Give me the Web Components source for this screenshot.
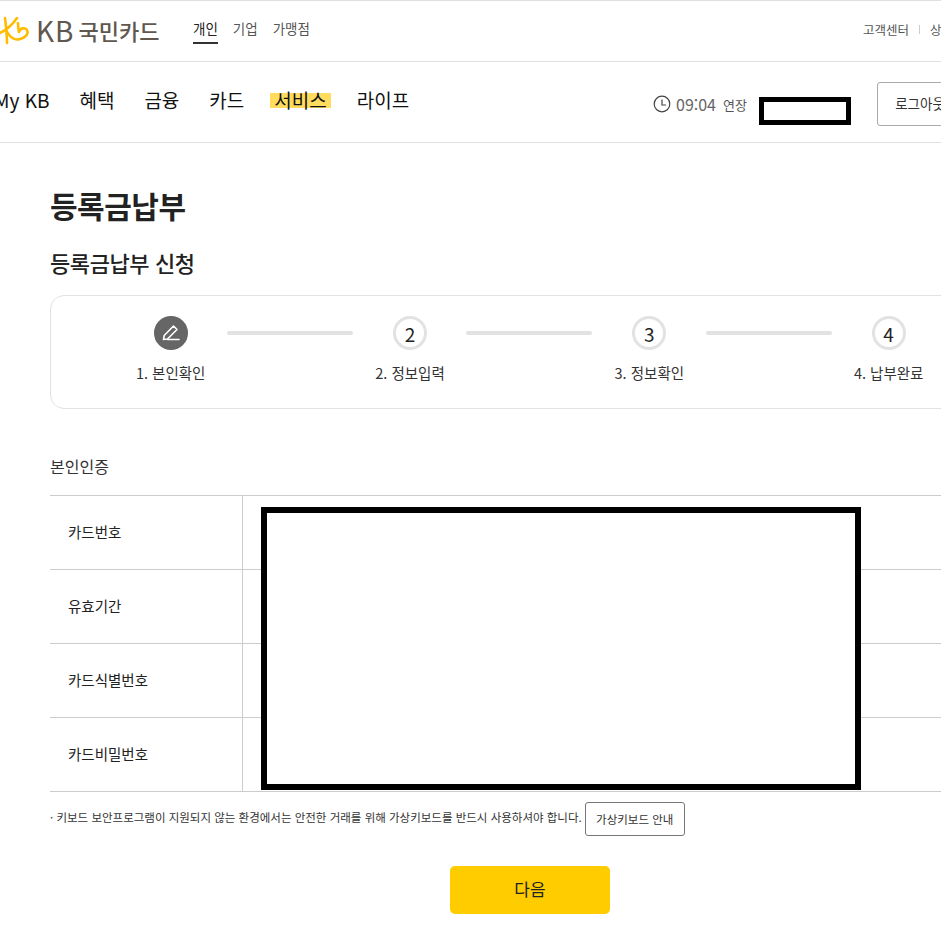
<!DOCTYPE html>
<html lang="ko">
<head>
<meta charset="utf-8">
<title>등록금납부</title>
<style>
html, body { margin: 0; padding: 0; height: 931px; overflow: hidden; background: #fff; }
body { font-family: "Noto Sans CJK KR", "Noto Sans", sans-serif; color: #222; width: 941px; }
</style>
</head>
<body>
<kb-top-bar>
  <kb-tab active>개인</kb-tab>
  <kb-tab>기업</kb-tab>
  <kb-tab>가맹점</kb-tab>
</kb-top-bar>
<kb-main-nav>
  <kb-nav-item>My KB</kb-nav-item>
  <kb-nav-item>혜택</kb-nav-item>
  <kb-nav-item>금융</kb-nav-item>
  <kb-nav-item>카드</kb-nav-item>
  <kb-nav-item mark>서비스</kb-nav-item>
  <kb-nav-item>라이프</kb-nav-item>
</kb-main-nav>
<kb-page>
  <kb-steps>
    <kb-step label="1. 본인확인" active></kb-step>
    <kb-step label="2. 정보입력">2</kb-step>
    <kb-step label="3. 정보확인">3</kb-step>
    <kb-step label="4. 납부완료" last>4</kb-step>
  </kb-steps>
  <kb-form>
    <kb-row label="카드번호"></kb-row>
    <kb-row label="유효기간"></kb-row>
    <kb-row label="카드식별번호"></kb-row>
    <kb-row label="카드비밀번호"></kb-row>
  </kb-form>
  <kb-note></kb-note>
  <kb-next>다음</kb-next>
</kb-page>

<script>
const topBarTmp = document.createElement('template');
topBarTmp.innerHTML = `
<style>
:host { display: flex; height: 60px; border-top: 1px solid #e0e0e0; border-bottom: 1px solid #e0e0e0; align-items: flex-start; white-space: nowrap; width: 941px; overflow: hidden; }
.logo { display: flex; align-items: center; width: 193px; height: 58px; flex: none; }
.logo svg { flex: none; margin-right: 6px; }
.logo span { color: #60584f; line-height: 58px; }
.logo .kb { font-size: 28px; letter-spacing: 1px; margin-right: 4px; }
.logo .name { font-size: 22px; font-weight: 500; }
.tabs { display: flex; gap: 15px; flex: none; }
.links { margin-left: auto; display: flex; align-items: center; height: 57px; font-size: 12.5px; color: #555; margin-right: -12px; flex: none; }
.links i { width: 1px; height: 9px; background: #ccc; margin: 0 10px; }
</style>
<div class="logo">
  <svg width="30" height="32" viewBox="0 0 30 32" fill="none" stroke="#ffbc00" stroke-width="2.6" stroke-linecap="round" stroke-linejoin="round">
    <path d="M5 4 C6 12 7 21 7 29"/>
    <path d="M17 4 C13 10 8 15 0 19"/>
    <path d="M6 16 C9 22 14 27 20 25 C25 24 29 20 27 16 C25 13 20 14 19 18 C18 15 18 12 18 9"/>
  </svg>
  <span class="kb">KB</span><span class="name">국민카드</span>
</div>
<div class="tabs"><slot></slot></div>
<div class="links"><span>고객센터</span><i></i><span>상담</span></div>
`;

class KbTopBar extends HTMLElement {
  constructor() {
    super();
    this.attachShadow({ mode: 'open' }).appendChild(topBarTmp.content.cloneNode(true));
  }
}

const tabTmp = document.createElement('template');
tabTmp.innerHTML = `
<style>
:host { display: block; font-size: 13.5px; color: #555; height: 43px; box-sizing: border-box; padding-top: 17px; line-height: 20px; }
:host([active]) { color: #222; border-bottom: 2px solid #333; }
</style>
<slot></slot>
`;

class KbTab extends HTMLElement {
  constructor() {
    super();
    this.attachShadow({ mode: 'open' }).appendChild(tabTmp.content.cloneNode(true));
  }
}

const mainNavTmp = document.createElement('template');
mainNavTmp.innerHTML = `
<style>
:host { display: flex; align-items: flex-start; height: 80px; border-bottom: 1px solid #e0e0e0; white-space: nowrap; width: 941px; overflow: hidden; position: relative; }
.items { display: flex; gap: 30px; margin-left: -6px; margin-top: 24px; flex: none; }
.session { display: flex; align-items: center; margin-left: auto; flex: none; height: 44px; margin-top: 20px; margin-right: -22px; }
.session svg { margin-right: 5px; }
.time { font-size: 16px; color: #666; }
.ext { font-size: 13px; color: #555; margin-left: 7px; width: 154px; }
.logout { width: 86px; height: 44px; box-sizing: border-box; border: 1px solid #aaa; border-radius: 3px; font-size: 13.5px; color: #333; text-align: center; line-height: 40px; }
.redact { position: absolute; left: 759px; top: 35px; width: 92px; height: 28px; box-sizing: border-box; border: 5px solid #000; background: #fff; }
</style>
<div class="items"><slot></slot></div>
<div class="session">
  <svg width="18" height="18" viewBox="0 0 18 18" fill="none" stroke="#444" stroke-width="1.2"><circle cx="9" cy="9" r="7.8"/><path d="M9 4.5V10H13"/></svg>
  <span class="time">09:04</span><span class="ext">연장</span>
  <div class="logout">로그아웃</div>
</div>
<div class="redact"></div>
`;

class KbMainNav extends HTMLElement {
  constructor() {
    super();
    this.attachShadow({ mode: 'open' }).appendChild(mainNavTmp.content.cloneNode(true));
  }
}

const navItemTmp = document.createElement('template');
navItemTmp.innerHTML = `
<style>
:host { display: block; font-size: 19px; line-height: 28px; color: #111; }
:host([mark]) span { display: block; margin: 0 -4px; padding: 0 4px; background: linear-gradient(transparent 7px, #ffdc5e 7px, #ffdc5e 22px, transparent 22px); }
</style>
<span><slot></slot></span>
`;

class KbNavItem extends HTMLElement {
  constructor() {
    super();
    this.attachShadow({ mode: 'open' }).appendChild(navItemTmp.content.cloneNode(true));
  }
}

const pageTmp = document.createElement('template');
pageTmp.innerHTML = `
<style>
:host { display: block; padding-left: 50px; width: 941px; box-sizing: border-box; overflow: hidden; }
h1 { margin: 0; padding-top: 39px; font-size: 30px; line-height: 46px; font-weight: 700; color: #222; letter-spacing: -0.5px; }
h2 { margin: 0; padding-top: 16px; font-size: 22px; line-height: 36px; font-weight: 500; color: #222; letter-spacing: -0.4px; }
.sub { padding-top: 45px; height: 41px; font-size: 16px; line-height: 24px; color: #333; }
</style>
<h1>등록금납부</h1>
<h2>등록금납부 신청</h2>
<slot name="steps"></slot>
<div class="sub">본인인증</div>
<slot name="form"></slot>
<slot name="note"></slot>
<slot name="next"></slot>
`;

class KbPage extends HTMLElement {
  constructor() {
    super();
    this.attachShadow({ mode: 'open' }).appendChild(pageTmp.content.cloneNode(true));
    for (const el of this.children) {
      el.slot = el.localName.replace('kb-', '');
    }
  }
}

const stepsTmp = document.createElement('template');
stepsTmp.innerHTML = `
<style>
:host { display: flex; margin-top: 15px; width: 960px; height: 114px; box-sizing: border-box; border: 1px solid #e2e2e2; border-radius: 14px; padding-top: 20px; }
</style>
<slot></slot>
`;

class KbSteps extends HTMLElement {
  constructor() {
    super();
    this.attachShadow({ mode: 'open' }).appendChild(stepsTmp.content.cloneNode(true));
  }
}

const stepTmp = document.createElement('template');
stepTmp.innerHTML = `
<style>
:host { display: flex; flex-direction: column; align-items: center; width: 239.33px; position: relative; flex: none; }
.dot { width: 34px; height: 34px; box-sizing: border-box; border-radius: 50%; border: 3px solid #e2e2e2; display: flex; align-items: center; justify-content: center; font-size: 19px; color: #222; background: #fff; }
:host([active]) .dot { background: #666; border-color: #666; }
:host(:not([active])) svg { display: none; }
.label { margin-top: 11px; font-size: 14.5px; line-height: 24px; color: #333; white-space: nowrap; }
.bar { position: absolute; left: 176px; width: 126px; top: 15px; height: 4px; border-radius: 2px; background: #e2e2e2; }
:host([last]) .bar { display: none; }
</style>
<div class="dot">
  <svg width="20" height="20" viewBox="0 0 20 20" fill="none" stroke="#fff" stroke-width="1.6" stroke-linejoin="round" stroke-linecap="round"><path d="M2.5 16.5 L3.2 12.5 L12.5 3 L16 6.5 L6.5 16 Z"/><path d="M6.5 16.5H18"/></svg>
  <slot></slot>
</div>
<div class="label"></div>
<div class="bar"></div>
`;

class KbStep extends HTMLElement {
  constructor() {
    super();
    this.attachShadow({ mode: 'open' }).appendChild(stepTmp.content.cloneNode(true));
  }
  connectedCallback() {
    this.shadowRoot.querySelector('.label').textContent = this.getAttribute('label');
  }
}

const formTmp = document.createElement('template');
formTmp.innerHTML = `
<style>
:host { display: block; position: relative; width: 960px; border-top: 1px solid #ccc; }
.redact { position: absolute; left: 211px; top: 11px; width: 600px; height: 283px; box-sizing: border-box; border: 6px solid #000; background: #fff; }
</style>
<slot></slot>
<div class="redact"></div>
`;

class KbForm extends HTMLElement {
  constructor() {
    super();
    this.attachShadow({ mode: 'open' }).appendChild(formTmp.content.cloneNode(true));
  }
}

const rowTmp = document.createElement('template');
rowTmp.innerHTML = `
<style>
:host { display: grid; grid-template-columns: 193px 1fr; height: 74px; box-sizing: border-box; border-bottom: 1px solid #ccc; }
.th { padding-left: 18px; font-size: 14.5px; line-height: 71px; color: #222; border-right: 1px solid #ccc; }
</style>
<div class="th"></div>
<div class="td"><slot></slot></div>
`;

class KbRow extends HTMLElement {
  constructor() {
    super();
    this.attachShadow({ mode: 'open' }).appendChild(rowTmp.content.cloneNode(true));
  }
  connectedCallback() {
    this.shadowRoot.querySelector('.th').textContent = this.getAttribute('label');
  }
}

const noteTmp = document.createElement('template');
noteTmp.innerHTML = `
<style>
:host { display: flex; align-items: center; height: 34px; margin-top: 10px; white-space: nowrap; font-size: 11.5px; color: #333; }
.text { margin-top: -5px; margin-right: 3px; }
.text::before { content: "· "; }
button { font: inherit; color: #333; background: #fff; border: 1px solid #777; border-radius: 3px; width: 100px; height: 34px; padding: 0; }
</style>
<span class="text">키보드 보안프로그램이 지원되지 않는 환경에서는 안전한 거래를 위해 가상키보드를 반드시 사용하셔야 합니다.</span>
<button type="button">가상키보드 안내</button>
`;

class KbNote extends HTMLElement {
  constructor() {
    super();
    this.attachShadow({ mode: 'open' }).appendChild(noteTmp.content.cloneNode(true));
  }
}

const nextTmp = document.createElement('template');
nextTmp.innerHTML = `
<style>
:host { display: block; width: 160px; height: 48px; margin: 30px 0 0 400px; }
button { width: 100%; height: 100%; border: none; border-radius: 5px; background: #ffcc00; color: #222; font: inherit; font-size: 17px; padding: 0 0 3px; }
</style>
<button type="button"><slot></slot></button>
`;

class KbNext extends HTMLElement {
  constructor() {
    super();
    this.attachShadow({ mode: 'open' }).appendChild(nextTmp.content.cloneNode(true));
  }
}

customElements.define('kb-top-bar', KbTopBar);
customElements.define('kb-tab', KbTab);
customElements.define('kb-main-nav', KbMainNav);
customElements.define('kb-nav-item', KbNavItem);
customElements.define('kb-page', KbPage);
customElements.define('kb-steps', KbSteps);
customElements.define('kb-step', KbStep);
customElements.define('kb-form', KbForm);
customElements.define('kb-row', KbRow);
customElements.define('kb-note', KbNote);
customElements.define('kb-next', KbNext);
</script>
</body>
</html>
